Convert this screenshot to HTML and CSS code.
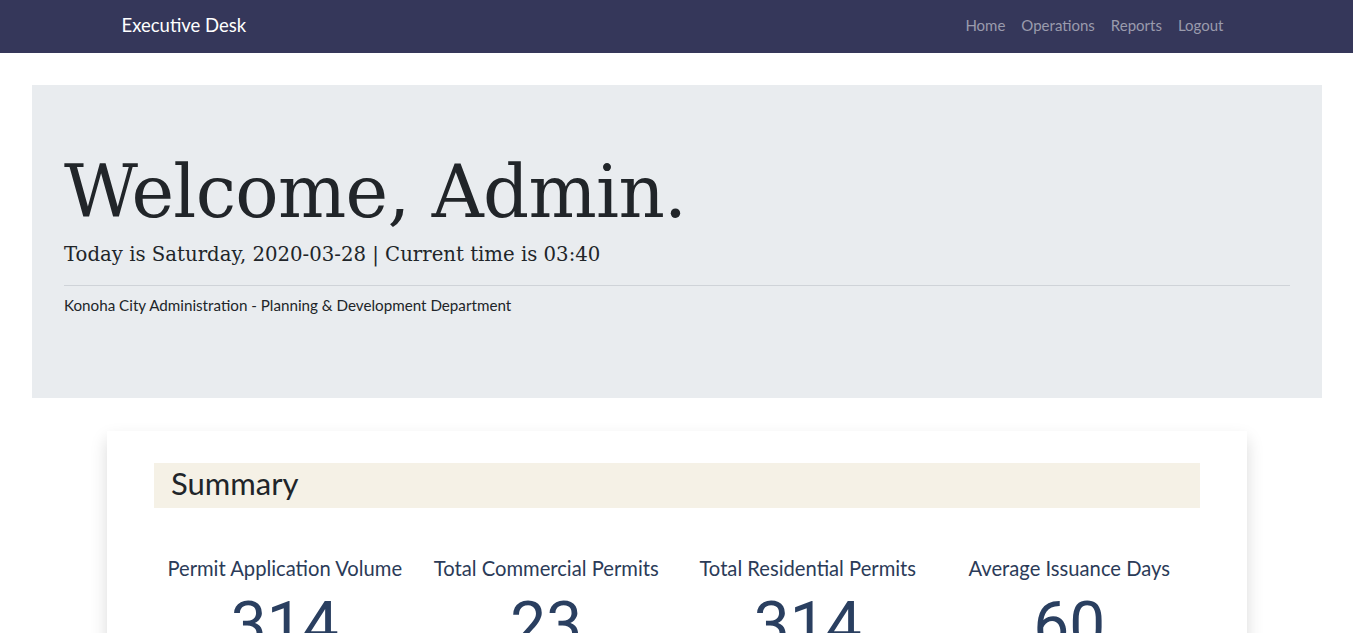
FILE: index.html
```html
<!DOCTYPE html>
<html lang="en">
<head>
<meta charset="utf-8">
<title>Executive Desk</title>
<link rel="stylesheet" href="styles.css">
</head>
<body>
<nav class="navbar">
  <div class="nav-inner">
    <a class="brand" href="#">Executive Desk</a>
    <ul class="nav-links">
      <li><a href="#">Home</a></li>
      <li><a href="#">Operations</a></li>
      <li><a href="#">Reports</a></li>
      <li><a href="#">Logout</a></li>
    </ul>
  </div>
</nav>
<main class="page">
  <section class="jumbotron">
    <h1 class="welcome">Welcome, Admin.</h1>
    <p class="lead">Today is Saturday, 2020-03-28 | Current time is 03:40</p>
    <hr class="divider">
    <p class="dept">Konoha City Administration - Planning &amp; Development Department</p>
  </section>
  <section class="card">
    <h2 class="card-title">Summary</h2>
    <div class="stats">
      <div class="stat">
        <div class="stat-label">Permit Application Volume</div>
        <div class="stat-value">314</div>
      </div>
      <div class="stat">
        <div class="stat-label">Total Commercial Permits</div>
        <div class="stat-value">23</div>
      </div>
      <div class="stat">
        <div class="stat-label">Total Residential Permits</div>
        <div class="stat-value">314</div>
      </div>
      <div class="stat">
        <div class="stat-label">Average Issuance Days</div>
        <div class="stat-value">60</div>
      </div>
    </div>
  </section>
</main>
</body>
</html>
```

FILE: styles.css
```css
* { box-sizing: border-box; }
html, body { margin: 0; padding: 0; }
body {
  font-family: "Lato", "Open Sans", sans-serif;
  font-size: 16px;
  color: #212529;
  background: #ffffff;
}
a { text-decoration: none; }

.navbar {
  background: #35375a;
  height: 53px;
  display: flex;
  align-items: center;
  padding-bottom: 4px;
}
.nav-inner {
  width: 1140px;
  margin: 0 auto;
  padding: 0 15px;
  display: flex;
  align-items: center;
  justify-content: space-between;
}
.brand {
  color: #ffffff;
  font-size: 18.5px;
}
.nav-links {
  list-style: none;
  margin: 0 8px 0 0;
  padding: 0;
  display: flex;
  gap: 16px;
}
.nav-links a {
  color: #9a9bad;
  font-size: 15px;
}

.page {
  padding: 32px 31px 0 32px;
}
.jumbotron {
  background: #e9ecef;
  padding: 64px 32px 0 32px;
  height: 313px;
}
.welcome {
  font-family: "DejaVu Serif", serif;
  font-weight: normal;
  font-size: 72px;
  line-height: 1.2;
  margin: 0 0 8px 0;
  color: #212529;
  letter-spacing: -0.7px;
}
.lead {
  font-family: "DejaVu Serif", serif;
  font-size: 19.7px;
  margin: 0;
  color: #212529;
}
.divider {
  border: 0;
  border-top: 1px solid #cfd3d8;
  margin: 19px 0 10px 0;
}
.dept {
  margin: 0;
  font-size: 15.2px;
}

.card {
  width: 1140px;
  margin: 33px auto 0 auto;
  background: #fff;
  box-shadow: 0 8px 16px rgba(0,0,0,0.15);
  padding: 32px 47px 40px 47px;
}
.card-title {
  background: #f5f1e6;
  font-weight: normal;
  font-size: 31px;
  margin: 0;
  height: 45px;
  line-height: 40px;
  padding-left: 17px;
}
.stats {
  display: grid;
  grid-template-columns: repeat(4, 1fr);
  padding-top: 46px;
}
.stat {
  text-align: center;
}
.stat-label {
  color: #2b3b58;
  font-size: 20.2px;
  line-height: 28px;
}
.stat-value {
  font-family: "Roboto", "Liberation Sans", sans-serif;
  color: #2a3f60;
  font-size: 64px;
  line-height: 1.2;
  margin-top: 6px;
}
```
